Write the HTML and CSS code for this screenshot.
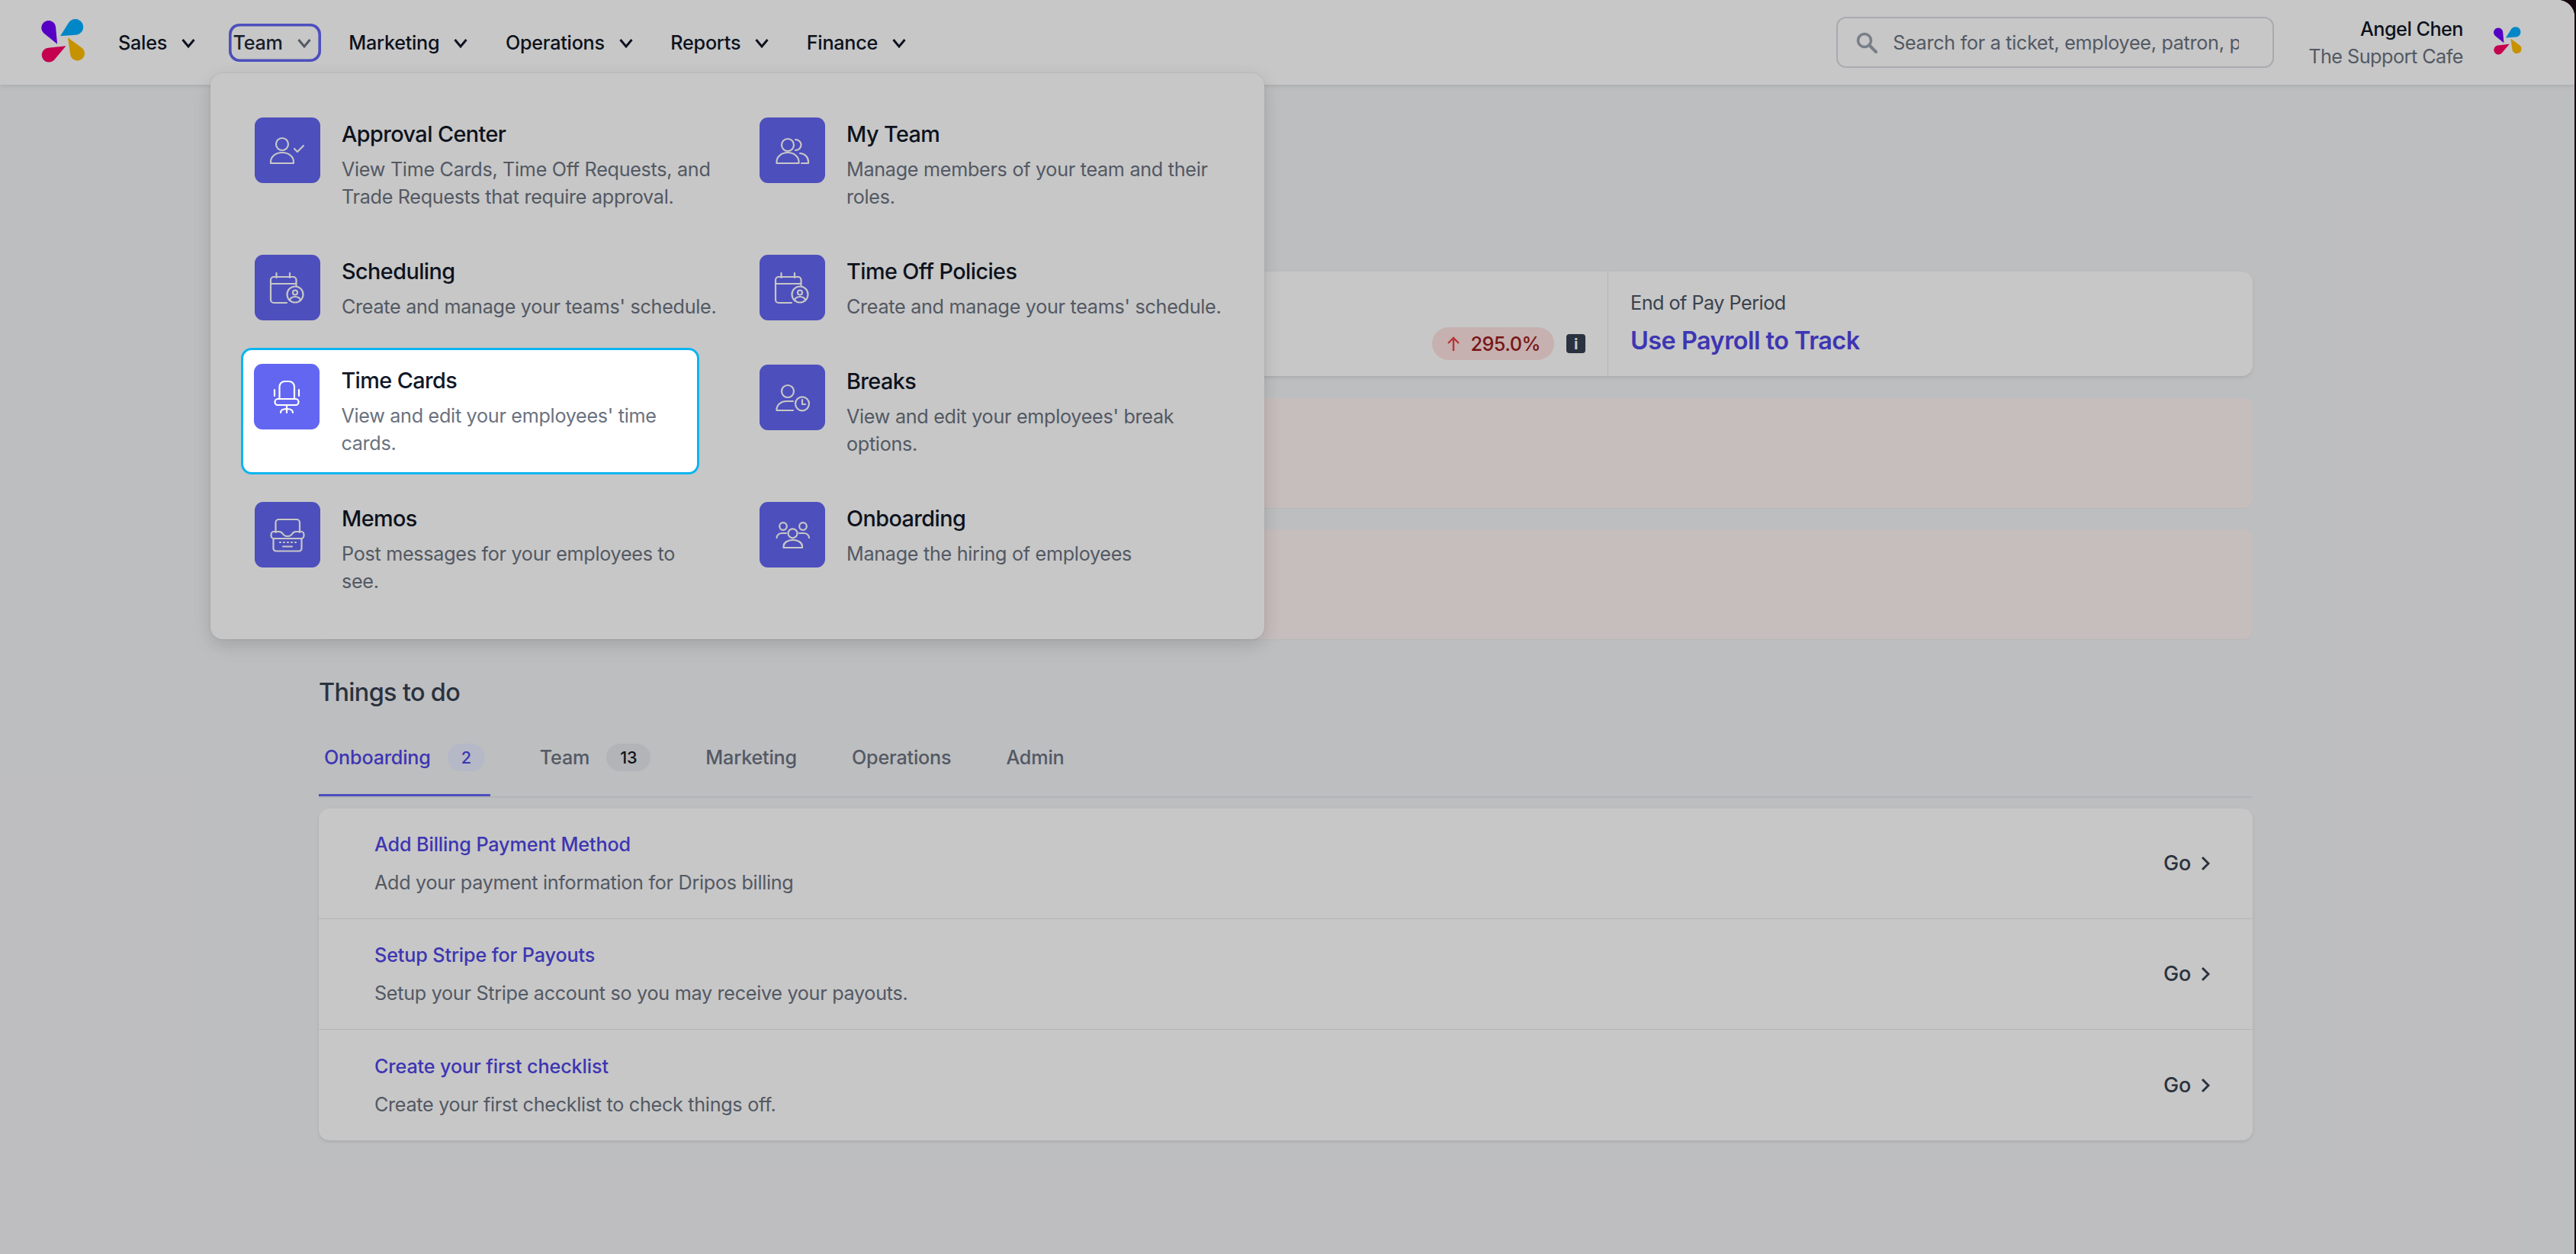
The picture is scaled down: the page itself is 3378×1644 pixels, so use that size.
FILE: index.html
```html
<!DOCTYPE html>
<html lang="en">
<head>
    <meta charset="UTF-8">
    <title>Dripos - Dashboard</title>
    <link rel="stylesheet" href="styles.css">
</head>
<body>

<svg class="defs" width="0" height="0">
    <symbol id="logo" viewBox="14 9.5 58 57.5">
        <path fill="#6d00fb" d="M35 42.5L17.5 28.4A9.5 9.5 0 1 1 33 20.2Z"/>
        <path fill="#00aeff" d="M39 32L50.1 14.4A10.5 10.5 0 1 1 59.8 30.5Z"/>
        <path fill="#fb0066" d="M46.5 45L23 47.55A9.5 9.5 0 1 0 31.3 63.1Z"/>
        <path fill="#ffbb00" d="M49 34L67.3 47.3A9.5 9.5 0 1 1 52.3 56.4Z"/>
    </symbol>
    <symbol id="chev" viewBox="0 0 36 36">
        <path d="M10.5 14L18 23L25.5 14" fill="none" stroke="currentColor" stroke-width="3"/>
    </symbol>
    <symbol id="calendar" viewBox="0 0 86 86">
        <path d="M54.5 40V33a4 4 0 0 0-4-4H25a4 4 0 0 0-4 4V59a4 4 0 0 0 4 4H42M21 38H54.5M28.5 24V30M46 24V30"/>
        <circle cx="53" cy="52" r="10.5"/>
        <circle cx="53" cy="49.5" r="3"/>
        <path d="M46 60a7 5 0 0 1 14 0"/>
    </symbol>
</svg>

<div class="page">
    <header class="topbar">
        <svg class="logo"><use href="#logo"/></svg>
        <nav class="nav">
            <a class="nav-item">Sales <svg class="chev"><use href="#chev"/></svg></a>
            <a class="nav-item nav-open">Team <svg class="chev"><use href="#chev"/></svg></a>
            <a class="nav-item">Marketing <svg class="chev"><use href="#chev"/></svg></a>
            <a class="nav-item">Operations <svg class="chev"><use href="#chev"/></svg></a>
            <a class="nav-item">Reports <svg class="chev"><use href="#chev"/></svg></a>
            <a class="nav-item">Finance <svg class="chev"><use href="#chev"/></svg></a>
        </nav>

        <div class="search">
            <svg class="search-icon" viewBox="0 0 28 28"><circle cx="11" cy="11" r="8.5" fill="none" stroke="currentColor" stroke-width="3.6"/><path d="M17 17L26 26" stroke="currentColor" stroke-width="4" stroke-linecap="round"/></svg>
            <input type="text" placeholder="Search for a ticket, employee, patron, page or setting">
        </div>
        <div class="user">
            <div class="user-name">Angel Chen</div>
            <div class="user-shop">The Support Cafe</div>
        </div>
        <svg class="logo-small"><use href="#logo"/></svg>

        <div class="menu">
            <a class="menu-item">
                <span class="menu-icon">
                    <svg viewBox="0 0 86 86"><circle cx="36" cy="35" r="8"/><path d="M21 60V58a15 12 0 0 1 30 0V60ZM52 41L56 45L64 37"/></svg>
                </span>
                <span class="menu-text">
                    <span class="menu-title">Approval Center</span>
                    <span class="menu-desc">View Time Cards, Time Off Requests, and Trade Requests that require approval.</span>
                </span>
            </a>
            <a class="menu-item">
                <span class="menu-icon">
                    <svg viewBox="0 0 86 86"><circle cx="37" cy="36" r="8"/><path d="M47 29a7.5 7 0 0 1 0 14M22.5 60V58a14.5 12 0 0 1 29 0V60ZM53 47a11 11 0 0 1 11 11v2h-9"/></svg>
                </span>
                <span class="menu-text">
                    <span class="menu-title">My Team</span>
                    <span class="menu-desc">Manage members of your team and their roles.</span>
                </span>
            </a>
            <a class="menu-item">
                <span class="menu-icon"><svg viewBox="0 0 86 86"><use href="#calendar"/></svg></span>
                <span class="menu-text">
                    <span class="menu-title">Scheduling</span>
                    <span class="menu-desc">Create and manage your teams' schedule.</span>
                </span>
            </a>
            <a class="menu-item">
                <span class="menu-icon"><svg viewBox="0 0 86 86"><use href="#calendar"/></svg></span>
                <span class="menu-text">
                    <span class="menu-title">Time Off Policies</span>
                    <span class="menu-desc">Create and manage your teams' schedule.</span>
                </span>
            </a>
            <a class="menu-item menu-focus">
                <span class="menu-icon">
                    <svg viewBox="0 0 86 86"><path d="M33.5 46V30a7 7 0 0 1 7-7h5.5a7 7 0 0 1 7 7V46M31 46H55a3.5 4 0 0 1 0 8H31a3.5 4 0 0 1 0-8ZM27 34V42M59 34V42M43 54V64M35 64q0-5 8-5q8 0 8 5"/></svg>
                </span>
                <span class="menu-text">
                    <span class="menu-title">Time Cards</span>
                    <span class="menu-desc">View and edit your employees' time cards.</span>
                </span>
            </a>
            <a class="menu-item">
                <span class="menu-icon">
                    <svg viewBox="0 0 86 86"><circle cx="37" cy="35" r="8"/><path d="M44 48H35a12.5 11 0 0 0-12.5 11V60H44"/><circle cx="56" cy="51.3" r="9"/><path d="M56 46V52H60"/></svg>
                </span>
                <span class="menu-text">
                    <span class="menu-title">Breaks</span>
                    <span class="menu-desc">View and edit your employees' break options.</span>
                </span>
            </a>
            <a class="menu-item">
                <span class="menu-icon">
                    <svg viewBox="0 0 86 86"><path d="M27.5 40V27a4 4 0 0 1 4-4H55a4 4 0 0 1 4 4V40M24.5 48H61.5V61a3.5 3.5 0 0 1-3.5 3.5H28a3.5 3.5 0 0 1-3.5-3.5ZM24.5 48a3 4.5 0 0 1 0-9H32q3 0 5 3t5 3h2q3 0 5-3t5-3h7.5a3 4.5 0 0 1 0 9M33 53H34M38 53H39M43 53H44M48 53H49M53 53H54M37 58.5H49"/></svg>
                </span>
                <span class="menu-text">
                    <span class="menu-title">Memos</span>
                    <span class="menu-desc">Post messages for your employees to<br>see.</span>
                </span>
            </a>
            <a class="menu-item">
                <span class="menu-icon">
                    <svg viewBox="0 0 86 86"><circle cx="31" cy="32" r="4.8"/><circle cx="57" cy="32" r="4.8"/><circle cx="43.5" cy="41.3" r="6"/><path d="M31.5 60V58a12 8 0 0 1 24.5 0V60ZM22.5 47a7 6 0 0 1 7-6H35M65 47a7 6 0 0 0-7-6H52"/></svg>
                </span>
                <span class="menu-text">
                    <span class="menu-title">Onboarding</span>
                    <span class="menu-desc">Manage the hiring of employees</span>
                </span>
            </a>
        </div>
    </header>

    <main class="content">
        <section class="stats">
            <div class="stat stat-wide">
                <span class="pill">
                    <svg class="pill-arrow" viewBox="0 0 20 20"><path d="M10 19V2M3 9L10 2L17 9"/></svg>
                    295.0%
                </span>
                <span class="info">i</span>
            </div>
            <div class="stat">
                <div class="stat-label">End of Pay Period</div>
                <div class="stat-value">Use Payroll to Track</div>
            </div>
        </section>

        <div class="banner"></div>
        <div class="banner"></div>

        <h2 class="section-title">Things to do</h2>
        <div class="tabs">
            <a class="tab tab-active">Onboarding <span class="badge">2</span></a>
            <a class="tab">Team <span class="badge">13</span></a>
            <a class="tab">Marketing</a>
            <a class="tab">Operations</a>
            <a class="tab">Admin</a>
        </div>

        <section class="todo">
            <div class="todo-row">
                <div>
                    <div class="todo-title">Add Billing Payment Method</div>
                    <div class="todo-desc">Add your payment information for Dripos billing</div>
                </div>
                <a class="go">Go <svg viewBox="0 0 12 20"><path d="M2 2L10 10L2 18"/></svg></a>
            </div>
            <div class="todo-row">
                <div>
                    <div class="todo-title">Setup Stripe for Payouts</div>
                    <div class="todo-desc">Setup your Stripe account so you may receive your payouts.</div>
                </div>
                <a class="go">Go <svg viewBox="0 0 12 20"><path d="M2 2L10 10L2 18"/></svg></a>
            </div>
            <div class="todo-row">
                <div>
                    <div class="todo-title">Create your first checklist</div>
                    <div class="todo-desc">Create your first checklist to check things off.</div>
                </div>
                <a class="go">Go <svg viewBox="0 0 12 20"><path d="M2 2L10 10L2 18"/></svg></a>
            </div>
        </section>
    </main>

    <div class="overlay"></div>
</div>

</body>
</html>
```

FILE: styles.css
```css
* {
    box-sizing: border-box;
}

html, body {
    height: 100%;
}

body {
    margin: 0;
    background: #14060f;
    font-family: Inter, "Liberation Sans", sans-serif;
    font-size: 25.2px;
    line-height: 36px;
    letter-spacing: -0.012em;
    color: #111827;
    overflow: hidden;
}

.defs {
    position: absolute;
}

.page {
    position: relative;
    width: calc(100% - 2px);
    height: 100%;
    background: #f3f4f6;
    border-top-right-radius: 22px;
    overflow: hidden;
}

/* top bar */
.topbar {
    display: flex;
    align-items: center;
    height: 111px;
    padding: 0 69px 0 54px;
    background: #fff;
    box-shadow: 0 2px 6px rgba(0, 0, 0, 0.1);
}

.logo {
    width: 58px;
    height: 57px;
    margin-bottom: 4px;
    flex: none;
}

.logo-small {
    width: 37px;
    height: 37px;
    margin-left: 40px;
    margin-bottom: 4px;
    flex: none;
}

.nav {
    display: flex;
    gap: 30.5px;
    margin-left: 37px;
    font-weight: 500;
    letter-spacing: -0.01em;
}

.nav-item {
    display: flex;
    align-items: center;
    height: 50px;
    padding: 0 4px 0 6px;
    border-radius: 14px;
}

.chev {
    width: 36px;
    height: 36px;
    margin-left: 10px;
}

.nav-open {
    box-shadow: inset 0 0 0 3.6px #6366f1;
    color: #1f2937;
}

.nav-open .chev {
    color: #6b7280;
}

.search {
    display: flex;
    align-items: center;
    width: 574px;
    height: 67px;
    margin-left: auto;
    padding: 0 44px 0 24px;
    background: #fff;
    border: 2px solid #d8dae3;
    border-radius: 13px;
}

.search-icon {
    width: 28px;
    height: 28px;
    flex: none;
    color: #9ca3af;
}

.search input {
    flex: 1;
    min-width: 0;
    margin-left: 20px;
    padding: 0;
    border: none;
    background: none;
    font: inherit;
    letter-spacing: inherit;
}

.search input::placeholder {
    color: #6b7280;
    opacity: 1;
}

.user {
    margin-left: 45px;
    text-align: right;
    letter-spacing: -0.02em;
}

.user-name {
    font-weight: 500;
}

.user-shop {
    color: #6b7280;
}

/* dropdown */
.menu {
    position: absolute;
    top: 96px;
    left: 276px;
    display: grid;
    grid-template-columns: 644px 644px;
    column-gap: 18px;
    row-gap: 14px;
    width: 1382px;
    padding: 36px 36px 36px 40px;
    background: #fff;
    border-radius: 16px;
    box-shadow: 0 8px 24px rgba(0, 0, 0, 0.14), 0 0 3px rgba(0, 0, 0, 0.1);
}

.menu-item {
    display: flex;
    gap: 28px;
    padding: 22px 18px;
}

.menu-icon {
    display: block;
    width: 86px;
    height: 86px;
    flex: none;
    background: #6366f1;
    border-radius: 11px;
}

.menu-icon svg {
    display: block;
    width: 86px;
    height: 86px;
    fill: none;
    stroke: #fff;
    stroke-width: 2.2;
    stroke-linecap: round;
    stroke-linejoin: round;
}

.menu-text {
    display: block;
    min-width: 0;
}

.menu-title {
    display: block;
    font-size: 28.8px;
    line-height: 43px;
    font-weight: 500;
    letter-spacing: -0.02em;
}

.menu-desc {
    display: block;
    margin-top: 7px;
    color: #6b7280;
}

.menu-focus {
    position: relative;
    z-index: 20;
    width: 601px;
    padding: 18.4px 14.4px;
    background: #fff;
    border: 3.6px solid #0bb5f0;
    border-radius: 14px;
}

.overlay {
    position: absolute;
    top: 0;
    right: 0;
    bottom: 0;
    left: 0;
    z-index: 10;
    background: rgba(0, 0, 0, 0.22);
}

/* page content */
.content {
    padding: 245px 422px 0 418px;
}

.stats {
    display: flex;
    height: 137px;
    margin-bottom: 29px;
    background: #fff;
    border-radius: 14px;
    box-shadow: 0 2px 4px rgba(0, 0, 0, 0.1);
    letter-spacing: -0.02em;
}

.stat {
    flex: 1;
    padding: 23px 29px 21px;
}

.stat-wide {
    display: flex;
    flex: none;
    width: 1691px;
    justify-content: flex-end;
    align-items: flex-end;
    gap: 16px;
    border-right: 1px solid #e5e7eb;
}

.stat-label {
    color: #4b5563;
}

.stat-value {
    margin-top: 7px;
    font-size: 32.4px;
    line-height: 50px;
    font-weight: 600;
    color: #4f46e5;
}

.pill {
    display: flex;
    align-items: center;
    height: 43px;
    padding: 0 18px;
    gap: 12px;
    background: #fee2e2;
    border-radius: 22px;
    color: #991b1b;
    font-weight: 500;
    white-space: nowrap;
}

.pill-arrow {
    width: 20px;
    height: 20px;
    fill: none;
    stroke: #ef4444;
    stroke-width: 2.4;
}

.info {
    display: flex;
    justify-content: center;
    align-items: center;
    width: 25px;
    height: 25px;
    margin-bottom: 9px;
    background: #374151;
    border-radius: 4px;
    color: #fff;
    font-size: 20px;
    font-weight: 700;
    line-height: 1;
}

.banner {
    height: 144px;
    background: #fef2f2;
    border-radius: 12px;
    box-shadow: 0 1px 2px rgba(0, 0, 0, 0.04);
}

.banner + .banner {
    margin-top: 28px;
}

.section-title {
    margin: 45px 0 0;
    font-size: 32.4px;
    line-height: 50px;
    font-weight: 500;
    letter-spacing: -0.02em;
    color: #374151;
}

.tabs {
    display: flex;
    gap: 58px;
    margin-top: 25px;
    border-bottom: 2px solid #e5e7eb;
}

.tab {
    display: flex;
    align-items: center;
    gap: 22px;
    height: 86px;
    padding: 0 7px 14px;
    border-bottom: 3.6px solid transparent;
    color: #6b7280;
    font-weight: 500;
    letter-spacing: -0.008em;
}

.tab-active {
    border-bottom-color: #6366f1;
    color: #4f46e5;
}

.badge {
    padding: 0 18px;
    line-height: 36px;
    font-size: 21.6px;
    background: #e5e7eb;
    border-radius: 18px;
    color: #111827;
}

.tab-active .badge {
    background: #e7ecff;
    color: #4f46e5;
}

.todo {
    margin-top: 14px;
    background: #fff;
    border-radius: 14px;
    box-shadow: 0 2px 4px rgba(0, 0, 0, 0.1);
}

.todo-row {
    display: flex;
    justify-content: space-between;
    align-items: center;
    height: 145px;
    padding: 0 56px 0 73px;
    border-bottom: 1px solid #e5e7eb;
}

.todo-row:last-child {
    border-bottom: none;
}

.todo-title {
    color: #4f46e5;
    font-weight: 500;
    letter-spacing: -0.005em;
}

.todo-desc {
    margin-top: 14px;
    color: #6b7280;
}

.go {
    display: flex;
    align-items: center;
    gap: 13px;
    font-size: 27px;
    color: #374151;
    font-weight: 500;
}

.go svg {
    width: 12px;
    height: 20px;
    fill: none;
    stroke: #374151;
    stroke-width: 3;
}
```
